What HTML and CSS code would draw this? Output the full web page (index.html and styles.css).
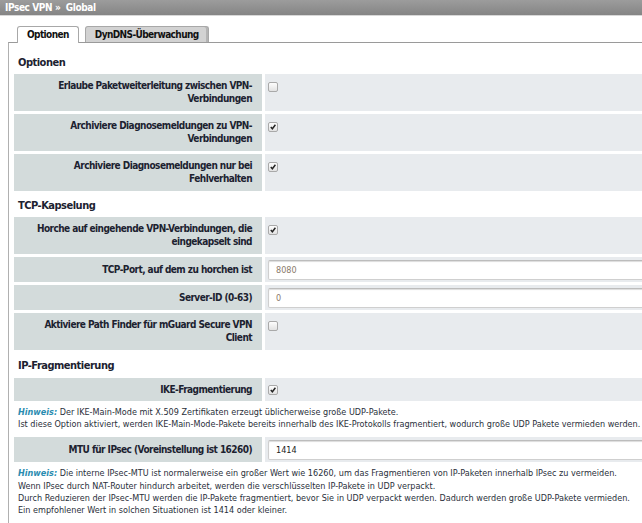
FILE: index.html
```html
<!DOCTYPE html>
<html lang="de">
<head>
    <meta charset="UTF-8">
    <title>IPsec VPN - Global</title>
    <link rel="stylesheet" href="styles.css">
</head>
<body>
    <div class="crumb">IPsec VPN &raquo;&nbsp; Global</div>

    <div class="tabs">
        <span class="tab active">Optionen</span>
        <span class="tab">DynDNS-Überwachung</span>
    </div>

    <div class="panel">
        <h3>Optionen</h3>
        <div class="row">
            <div class="label">Erlaube Paketweiterleitung zwischen VPN-Verbindungen</div>
            <div class="value"><span class="check"></span></div>
        </div>
        <div class="row">
            <div class="label">Archiviere Diagnosemeldungen zu VPN-Verbindungen</div>
            <div class="value"><span class="check on"><svg viewBox="0 0 9 9"><path d="M2 4.5l1.8 2 3.4-4.5" /></svg></span></div>
        </div>
        <div class="row">
            <div class="label">Archiviere Diagnosemeldungen nur bei Fehlverhalten</div>
            <div class="value"><span class="check on"><svg viewBox="0 0 9 9"><path d="M2 4.5l1.8 2 3.4-4.5" /></svg></span></div>
        </div>

        <h3>TCP-Kapselung</h3>
        <div class="row">
            <div class="label">Horche auf eingehende VPN-Verbindungen, die eingekapselt sind</div>
            <div class="value"><span class="check on"><svg viewBox="0 0 9 9"><path d="M2 4.5l1.8 2 3.4-4.5" /></svg></span></div>
        </div>
        <div class="row short">
            <div class="label">TCP-Port, auf dem zu horchen ist</div>
            <div class="value"><input type="text" class="field dim" value="8080"></div>
        </div>
        <div class="row short">
            <div class="label">Server-ID (0-63)</div>
            <div class="value"><input type="text" class="field dim" value="0"></div>
        </div>
        <div class="row">
            <div class="label">Aktiviere Path Finder für mGuard Secure VPN Client</div>
            <div class="value"><span class="check"></span></div>
        </div>

        <h3 class="wide">IP-Fragmentierung</h3>
        <div class="row single">
            <div class="label">IKE-Fragmentierung</div>
            <div class="value"><span class="check on"><svg viewBox="0 0 9 9"><path d="M2 4.5l1.8 2 3.4-4.5" /></svg></span></div>
        </div>
        <p class="hint"><em>Hinweis:</em> Der IKE-Main-Mode mit X.509 Zertifikaten erzeugt üblicherweise große UDP-Pakete.<br>
        Ist diese Option aktiviert, werden IKE-Main-Mode-Pakete bereits innerhalb des IKE-Protokolls fragmentiert, wodurch große UDP Pakete vermieden werden.</p>
        <div class="row short">
            <div class="label">MTU für IPsec (Voreinstellung ist 16260)</div>
            <div class="value"><input type="text" class="field" value="1414"></div>
        </div>
        <p class="hint"><em>Hinweis:</em> Die interne IPsec-MTU ist normalerweise ein großer Wert wie 16260, um das Fragmentieren von IP-Paketen innerhalb IPsec zu vermeiden.<br>
        Wenn IPsec durch NAT-Router hindurch arbeitet, werden die verschlüsselten IP-Pakete in UDP verpackt.<br>
        Durch Reduzieren der IPsec-MTU werden die IP-Pakete fragmentiert, bevor Sie in UDP verpackt werden. Dadurch werden große UDP-Pakete vermieden.<br>
        Ein empfohlener Wert in solchen Situationen ist 1414 oder kleiner.</p>
    </div>
</body>
</html>
```

FILE: styles.css
```css
body {
    margin: 0;
    padding: 0;
    font-family: "DejaVu Sans Condensed", "DejaVu Sans", sans-serif;
    font-size: 9px;
    color: #1c2230;
    background: white;
    overflow: hidden;
}
.crumb {
    height: 15px;
    line-height: 15px;
    padding-left: 5px;
    background: linear-gradient(#9c9c9c, #858585);
    border-bottom: 1px solid #d8d8d8;
    color: white;
    font-weight: bold;
    font-size: 10px;
    letter-spacing: -0.4px;
}
.tabs {
    display: flex;
    gap: 6px;
    margin-top: 9px;
    padding-left: 17px;
    height: 17px;
    align-items: flex-end;
}
.tab {
    height: 15px;
    line-height: 15px;
    padding: 0 9px;
    font-weight: bold;
    font-size: 10px;
    letter-spacing: -0.6px;
    background: #d2d2d2;
    border: 1px solid #a8a8a8;
    border-bottom: none;
    border-radius: 3px 3px 0 0;
    box-shadow: inset -2px 0 0 #b4b4b4;
    color: #111;
}
.tab.active {
    background: white;
    height: 16px;
    position: relative;
    top: 1px;
    box-shadow: none;
}
.panel {
    margin-left: 8px;
    border-top: 1px solid #9a9a9a;
    border-left: 1px solid #b0b0b0;
    padding: 5px 0 20px 5px;
}
h3 {
    margin: 8px 0 5px 4px;
    font-size: 11px;
    line-height: 13px;
    letter-spacing: -0.5px;
    font-weight: bold;
    color: #1c2230;
}
h3.wide {
    margin-top: 9px;
    margin-bottom: 6px;
}
.row {
    display: flex;
    gap: 3px;
    min-height: 37px;
    margin-bottom: 3px;
    overflow: hidden;
}
.row.short {
    min-height: 25px;
}
.row.single {
    min-height: 23px;
}
.label {
    width: 220px;
    flex: none;
    background: #d3dbdb;
    text-align: right;
    font-weight: bold;
    font-size: 10px;
    letter-spacing: -0.55px;
    line-height: 13px;
    padding: 5px 10px 0 18px;
}
.row.short .label,
.row.single .label {
    padding-top: 0;
    display: flex;
    align-items: center;
    justify-content: flex-end;
}
.value {
    flex: 1;
    background: #e8ebee;
    padding: 8px 0 0 3px;
}
.row.short .value {
    padding: 3px 0 0 3px;
}
.row.single .value {
    padding-top: 7px;
}
.check {
    display: block;
    width: 8px;
    height: 8px;
    border: 1px solid #a9a9a9;
    border-radius: 2px;
    background: linear-gradient(#fdfdfd, #e2e2e2);
}
.check svg {
    display: block;
    width: 8px;
    height: 8px;
}
.check svg path {
    fill: none;
    stroke: #222;
    stroke-width: 1.6;
}
.field {
    display: block;
    width: calc(100% + 20px);
    box-sizing: border-box;
    height: 20px;
    border: 1px solid #cfcfcf;
    border-top-color: #bcbcbc;
    box-shadow: inset 0 1px 1px #dcdcdc;
    padding: 0 7px;
    font-family: "DejaVu Sans Condensed", "DejaVu Sans", sans-serif;
    font-size: 9px;
    color: #222;
    background: white;
    border-radius: 2px 0 0 2px;
}
.field.dim {
    color: #8a7a6a;
}
.hint {
    margin: 5px 0 7px 4px;
    font-size: 9px;
    line-height: 12.2px;
    white-space: nowrap;
    color: #2a2f3a;
}
.hint em {
    color: #2a8cb0;
    font-weight: bold;
}
```
